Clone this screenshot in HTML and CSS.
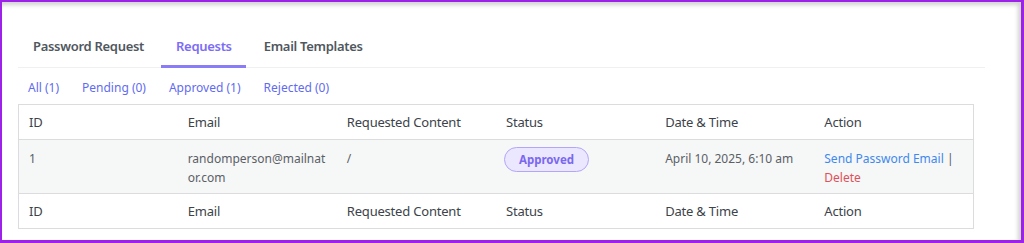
FILE: index.html
```html
<!DOCTYPE html>
<html lang="en">
<head>
  <meta charset="UTF-8" />
  <meta name="viewport" content="width=device-width, initial-scale=1.0" />
  <link rel="stylesheet" href="styles.css">
</head>
<body>
  <div class="frame">
    <div class="page">
      <div class="tabs">
        <a class="tab">Password Request</a>
        <a class="tab active">Requests</a>
        <a class="tab">Email Templates</a>
      </div>

      <div class="filters">
        <a>All (1)</a>
        <a>Pending (0)</a>
        <a>Approved (1)</a>
        <a>Rejected (0)</a>
      </div>

      <table class="requests">
        <thead>
          <tr>
            <th>ID</th>
            <th>Email</th>
            <th>Requested Content</th>
            <th>Status</th>
            <th>Date &amp; Time</th>
            <th>Action</th>
          </tr>
        </thead>
        <tbody>
          <tr>
            <td>1</td>
            <td class="email">randomperson@mailnator.com</td>
            <td>/</td>
            <td><span class="badge">Approved</span></td>
            <td>April 10, 2025, 6:10 am</td>
            <td><a class="send">Send Password Email</a> | <a class="delete">Delete</a></td>
          </tr>
        </tbody>
        <tfoot>
          <tr>
            <th>ID</th>
            <th>Email</th>
            <th>Requested Content</th>
            <th>Status</th>
            <th>Date &amp; Time</th>
            <th>Action</th>
          </tr>
        </tfoot>
      </table>
    </div>
  </div>
</body>
</html>
```

FILE: styles.css
```css
html, body {
  margin: 0;
  padding: 0;
  height: 100%;
  background-color: #ffffff;
}

.frame {
  box-sizing: border-box;
  height: 243px;
  border-top: 2px solid #9b22e6;
  border-left: 2px solid #9b22e6;
  border-right: 3px solid #9b22e6;
  border-bottom: 3px solid #9b22e6;
  box-shadow: inset -3px 3px 4px rgba(0,0,0,0.18);
  font-family: "Noto Sans", "Open Sans", sans-serif;
  overflow: hidden;
}

.page {
  padding: 25px 0 0 16px;
}

.tabs {
  display: flex;
  gap: 3px;
  width: 967px;
  border-bottom: 1px solid #f0f0f1;
}

.tab {
  padding: 10px 14px 10px 15px;
  font-size: 13px;
  line-height: 18px;
  font-weight: 600;
  letter-spacing: -0.3px;
  color: #50575e;
  border-bottom: 3px solid transparent;
  margin-bottom: -1px;
}

.tab.active {
  color: #7b6cf6;
  border-bottom-color: #8a7cf7;
}

.filters {
  display: flex;
  gap: 23px;
  padding: 11px 0 0 10px;
  height: 25px;
  font-size: 12px;
  line-height: 18px;
}

.filters a {
  color: #5f6cf0;
}

.requests {
  width: 956px;
  border-collapse: collapse;
  table-layout: fixed;
  border: 1px solid #dcdcde;
}

.requests th {
  text-align: left;
  font-weight: 400;
  font-size: 13px;
  letter-spacing: -0.2px;
  line-height: 18px;
  color: #3c434a;
  padding: 8px 10px;
}

.requests thead tr {
  border-bottom: 1px solid #dcdcde;
}

.requests tfoot tr {
  border-top: 1px solid #dcdcde;
}

.requests tbody tr {
  background-color: #f6f7f7;
}

.requests td {
  vertical-align: top;
  color: #5a6066;
  padding: 9px 10px 6px;
  line-height: 19px;
  font-size: 12px;
}

.email {
  word-break: break-all;
}

.badge {
  display: inline-block;
  box-sizing: border-box;
  height: 25px;
  margin-top: -2px;
  margin-left: -2px;
  padding: 2px 14px 0;
  border: 1px solid #b3a6f7;
  border-radius: 13px;
  background-color: #ebe7ff;
  color: #7a68ee;
  font-size: 11.5px;
  font-weight: 700;
  line-height: 19px;
}

.send {
  color: #4088ee;
}

.delete {
  color: #e0505a;
}
```
